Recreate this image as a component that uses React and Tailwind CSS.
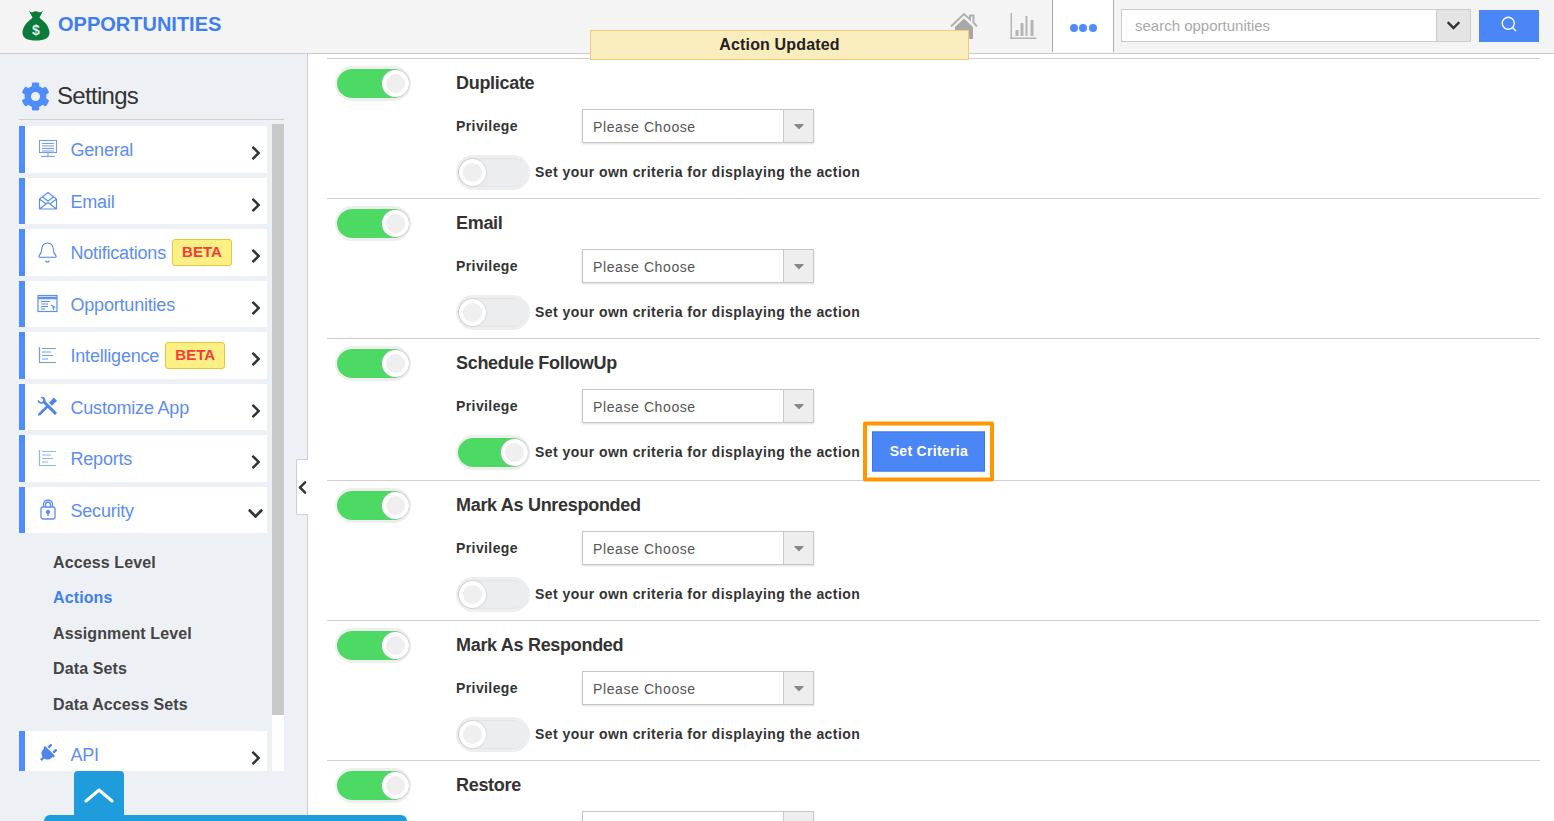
import React from "react";
import { FaChevronRight, FaChevronDown, FaChevronLeft, FaCog, FaPlug, FaCaretDown } from "react-icons/fa";
import { Search, Bell } from "lucide-react";

const MoneyBag = () => (
  <svg width="28" height="31" viewBox="0 0 28 31" fill="#0b7a3b">
    <path d="M7 1c2 1.200 3 1.500 4 1 1.500-1 4-1 5.500 0 1.200.5 2.500.2 4.500-1l-3.500 6.500 1 1.200c4.500 3 9 8.500 9 14 0 5.300-5 7.800-13.500 7.800S.5 28 .5 22.700c0-5.500 4.500-11 9-14l1-1.200z" />
    <text x="14" y="25" textAnchor="middle" fontSize="14" fontWeight="700" fill="#dff3e6" fontFamily="Liberation Sans">$</text>
  </svg>
);

const HomeIcon = () => (
  <svg width="28" height="27" viewBox="0 0 28 27">
    <path d="M1 14.500 14 2l6 5.500V3.500h3.500v7.200L27 14.500" fill="none" stroke="#b0b0b0" strokeWidth="2" />
    <path d="M5 15 14 6.500l9 8.500v12H5z" fill="#a8a8a8" />
  </svg>
);

const GeneralIcon = () => (
  <svg width="20" height="20" viewBox="0 0 20 20" fill="none" stroke="#6f9df5" strokeWidth="1">
    <rect x="1.500" y="1.500" width="17" height="12" />
    <path d="M4 4.500h12M4 7h12M4 9.500h12M4 12h12M10 14v3.500M3 17.500h14" />
  </svg>
);

const EmailIcon = () => (
  <svg width="20" height="20" viewBox="0 0 20 20" fill="none" stroke="#5b8ff0" strokeWidth="1.200">
    <path d="M1.500 8 10 1.500 18.500 8v10h-17zM1.500 8l6.500 5 2-1.500 2 1.500 6.500-5M1.500 18 8 13M18.500 18 12 13M4.500 6l5.500 4 5.500-4" />
  </svg>
);

const OppIcon = () => (
  <svg width="21" height="20" viewBox="0 0 21 20" fill="none" stroke="#5b8ff0" strokeWidth="1.200">
    <rect x="1" y="1.500" width="19" height="16" />
    <path d="M1 4h19" strokeWidth="2.500" />
    <path d="M4 7.500h9M4 10h7M4 12.500h7M4 15h4" />
    <path d="M14 11l3.500 2-1.500.5 1 2.500" strokeWidth="1.300" />
  </svg>
);

const IntelIcon = ({ light }) => (
  <svg width="19" height="18" viewBox="0 0 19 18" fill="none" stroke={light ? "#8fb4f5" : "#6f9df5"} strokeWidth="1.200">
    <path d="M1.500 1v15.500H18" />
    <path d="M4 2.500h14M4 6h9M4 9.500h11M4 13h6" />
  </svg>
);

const ToolsIcon = () => (
  <svg width="21" height="21" viewBox="0 0 20 20" fill="#4d84ee">
    <path d="M1 3.500 3.500 6 5.500 5.500 6 3.500 3.500 1C6 .2 8.500 2 8 5l10.500 10.500c1 1-.8 3-2 2L6 7C3 8-.5 6 1 3.500z" />
    <path d="m1.500 16.500 7.500-7.500 1.800 1.800-7.500 7.500-2.500.5zM11.500 6.500 16 1.500l3 3-4.800 4.700z" />
  </svg>
);

const LockIcon = () => (
  <svg width="18" height="21" viewBox="0 0 18 21" fill="none" stroke="#5b8ff0" strokeWidth="1.300">
    <rect x="2" y="8" width="14" height="12" rx="2" />
    <path d="M4.500 8V5.500a4.500 4.500 0 0 1 9 0V8M6.500 8V5.500a2.500 2.500 0 0 1 5 0V8" />
    <circle cx="9" cy="13" r="1.500" fill="#5b8ff0" />
    <path d="M9 14v3" />
  </svg>
);

const ChartIcon = () => (
  <svg width="27" height="26" viewBox="0 0 26 26" fill="#b5b5b5">
    <rect x="0" y="0" width="1.500" height="26" />
    <rect x="0" y="24.500" width="26" height="1.500" />
    <rect x="5" y="17" width="3" height="6" />
    <rect x="10" y="10" width="3" height="13" />
    <rect x="15" y="3" width="2" height="20" />
    <rect x="20" y="7" width="3" height="16" />
  </svg>
);

const menu = [
  { label: "General", icon: <GeneralIcon /> },
  { label: "Email", icon: <EmailIcon /> },
  { label: "Notifications", icon: <Bell size={23} strokeWidth={1.1} color="#4d84ee" />, beta: true },
  { label: "Opportunities", icon: <OppIcon /> },
  { label: "Intelligence", icon: <IntelIcon />, beta: true },
  { label: "Customize App", icon: <ToolsIcon /> },
  { label: "Reports", icon: <IntelIcon light /> },
];

const subItems = ["Access Level", "Actions", "Assignment Level", "Data Sets", "Data Access Sets"];

const actions = [
  { name: "Duplicate" },
  { name: "Email" },
  { name: "Schedule FollowUp", criteria: true },
  { name: "Mark As Unresponded" },
  { name: "Mark As Responded" },
  { name: "Restore" },
];

const MenuRow = ({ label, icon, beta, open, className }) => (
  <div className={`flex items-center border-l-[6px] border-[#4f8cff] bg-white shrink-0 ${className}`}>
    <div className="flex w-[45.500px] shrink-0 justify-center">{icon}</div>
    <span className="mt-[3px] text-[18px] tracking-[-0.2px] text-[#5c8df2]">{label}</span>
    {beta && (
      <span className="ml-[6px] flex h-[27px] w-[60px] items-center justify-center rounded-[3px] border border-[#e0c93f] bg-[#fcf084] text-[15px] font-bold text-[#f53b3b]">
        BETA
      </span>
    )}
    <span className="ml-auto mr-[3px] mt-[8px] text-[#333]">
      {open ? <FaChevronDown size={17} /> : <FaChevronRight size={16} />}
    </span>
  </div>
);

const Toggle = ({ on, small }) => (
  <div
    className={`relative shrink-0 rounded-full border-x-2 border-y-[3px] border-[#eeeeee] ${small ? "h-[35px] w-[74px]" : "h-[35px] w-[76px]"} ${
      on ? "bg-[#4cd964]" : "bg-[#ecedef] shadow-[inset_2px_0_2px_#ccc]"
    }`}
  >
    <div
      className={`absolute top-[1px] h-[27px] w-[27px] rounded-full border-[4px] border-white bg-[#efefef] shadow-[0_0_2px_#bbb] ${
        on ? "right-0" : "left-[1px]"
      }`}
    />
  </div>
);

const ActionRow = ({ name, criteria }) => (
  <div className={`flex border-t border-[#cfcfcf] pl-[8px] ${criteria ? "h-[142px]" : "h-[140px]"}`}>
    <div className="pt-[7px]">
      <Toggle on />
    </div>
    <div className="ml-[45px] flex-1 pt-[13px]">
      <div className="text-[18px] font-bold leading-[22px] tracking-[-0.3px] text-[#333]">{name}</div>
      <div className="mt-[15px] flex items-center">
        <span className="w-[126px] text-[14px] font-bold tracking-[0.4px] text-[#333]">Privilege</span>
        <div className="flex h-[34px] w-[232px] border border-[#c8c8c8] bg-white shadow-[0_1px_2px_#ddd]">
          <span className="flex-1 pl-[10px] text-[14px] leading-[34px] tracking-[0.6px] text-[#555]">Please Choose</span>
          <span className="flex w-[30px] items-center justify-center border-l border-[#c8c8c8] bg-[#eeeeee] text-[#888]">
            <FaCaretDown size={16} />
          </span>
        </div>
      </div>
      <div className="mt-[12px] flex items-center">
        <Toggle on={criteria} small />
        <span className="ml-[5px] text-[14px] font-bold tracking-[0.45px] text-[#333]">
          Set your own criteria for displaying the action
        </span>
        {criteria && (
          <div className="-my-[14px] ml-[3px] -translate-y-[1.500px] rounded-[2px] border-[4px] border-[#ff9800] bg-white px-[5px] py-[6px]">
            <button className="block h-[40px] w-[113px] border border-[#3a76e8] bg-[#4a86f5] text-[14px] font-bold tracking-[0.3px] text-white">
              Set Criteria
            </button>
          </div>
        )}
      </div>
    </div>
  </div>
);

export default function App() {
  return (
    <div className="relative flex h-[821px] w-[1554px] flex-col overflow-hidden bg-white font-['Liberation_Sans',Arial,sans-serif]">
      <header className="flex h-[54px] shrink-0 items-center border-b border-[#cccccc] bg-[#f4f4f4]">
        <div className="ml-[22px] -mt-[3px]">
          <MoneyBag />
        </div>
        <span className="ml-[8px] -mt-[5px] text-[20px] font-bold leading-none text-[#3f7ef0]">OPPORTUNITIES</span>
        <div className="ml-auto flex h-[52px] items-center self-start">
          <span className="mr-[32px] -mt-[1px]">
            <HomeIcon />
          </span>
          <span className="mr-[15px] -mt-[1px]">
            <ChartIcon />
          </span>
          <div className="flex h-full w-[62px] items-center justify-center gap-[1.500px] border-x border-[#aaaaaa] bg-white pt-[4px]">
            <span className="h-[8px] w-[8px] rounded-full bg-[#4f8cff]" />
            <span className="h-[8px] w-[8px] rounded-full bg-[#4f8cff]" />
            <span className="h-[8px] w-[8px] rounded-full bg-[#4f8cff]" />
          </div>
          <div className="ml-[7px] mt-[-1px] flex h-[33px] w-[350px] border border-[#cccccc] bg-white">
            <span className="flex-1 pl-[13px] text-[15px] leading-[31px] text-[#a8a8a8]">search opportunities</span>
            <span className="flex w-[34px] items-center justify-center border-l border-[#cccccc] bg-[#e4e4e4] text-[#333]">
              <FaChevronDown size={15} />
            </span>
          </div>
          <button className="ml-[8px] mr-[15px] mt-[-1px] flex h-[32px] w-[60px] items-center justify-center bg-[#4a86f5] pb-[3px] text-white">
            <Search size={18} strokeWidth={1.8} />
          </button>
        </div>
      </header>

      <div className="flex min-h-0 flex-1">
        <aside className="relative flex w-[308px] shrink-0 flex-col border-r border-[#cfcfcf] bg-[#edf0f5] pl-[19px]">
          <div className="mt-[26px] flex h-[40px] w-[265px] shrink-0 items-center border-b border-[#cfcfcf] pb-[8px]">
            <span className="ml-[2px] mt-[2px] text-[#4f8cff]">
              <FaCog size={29} />
            </span>
            <span className="ml-[7px] text-[24px] tracking-[-0.7px] text-[#333]">Settings</span>
          </div>
          <div className="mt-[4px] flex h-[647px] w-[265px] shrink-0 overflow-hidden">
            <div className="flex w-[248px] shrink-0 flex-col overflow-hidden pt-[2px]">
              {menu.map((m) => (
                <MenuRow key={m.label} {...m} className="mb-[5px] h-[46.500px]" />
              ))}
              <MenuRow label="Security" icon={<LockIcon />} open className="h-[46px]" />
              <div className="flex h-[198px] shrink-0 flex-col pl-[34px] pt-[12px]">
                {subItems.map((s) => (
                  <div
                    key={s}
                    className={`h-[35.500px] text-[16px] font-bold leading-[35px] tracking-[0.12px] ${
                      s === "Actions" ? "text-[#3f7ef0]" : "text-[#444]"
                    }`}
                  >
                    {s}
                  </div>
                ))}
              </div>
              <MenuRow
                label="API"
                icon={
                  <span className="rotate-45">
                    <FaPlug size={19} color="#4d84ee" />
                  </span>
                }
                className="h-[46px]"
              />
            </div>
            <div className="ml-[5px] w-[12px] bg-white">
              <div className="h-[591px] bg-[#c8c8c8]" />
            </div>
          </div>
          <div className="absolute right-[-1px] top-[405px] flex h-[56px] w-[12px] items-center justify-center rounded-l-[2px] border border-r-0 border-[#cfcfcf] bg-white text-[#333]">
            <FaChevronLeft size={15} />
          </div>
        </aside>

        <main className="min-w-0 flex-1 overflow-hidden pl-[19px] pr-[14px] pt-[4px]">
          {actions.map((a) => (
            <ActionRow key={a.name} {...a} />
          ))}
        </main>
      </div>

      <div className="absolute left-[590px] top-[30px] flex h-[30px] w-[379px] items-center justify-center border border-[#f0cc7a] bg-[#faedbd] text-[16px] font-bold tracking-[0.15px] text-[#222]">
        Action Updated
      </div>
      <div className="absolute bottom-0 left-[74px] flex h-[50px] w-[50px] justify-center rounded-t-[4px] bg-[#1f9cdc] pt-[16px] text-white">
        <svg width="30" height="16" viewBox="0 0 30 16" fill="none" stroke="#fff" strokeWidth="3" strokeLinecap="round" strokeLinejoin="round">
          <path d="M2 14 15 3l13 11" />
        </svg>
      </div>
      <div className="absolute bottom-0 left-[44px] h-[6px] w-[363px] rounded-t-[6px] bg-[#1f9cdc]" />
    </div>
  );
}
